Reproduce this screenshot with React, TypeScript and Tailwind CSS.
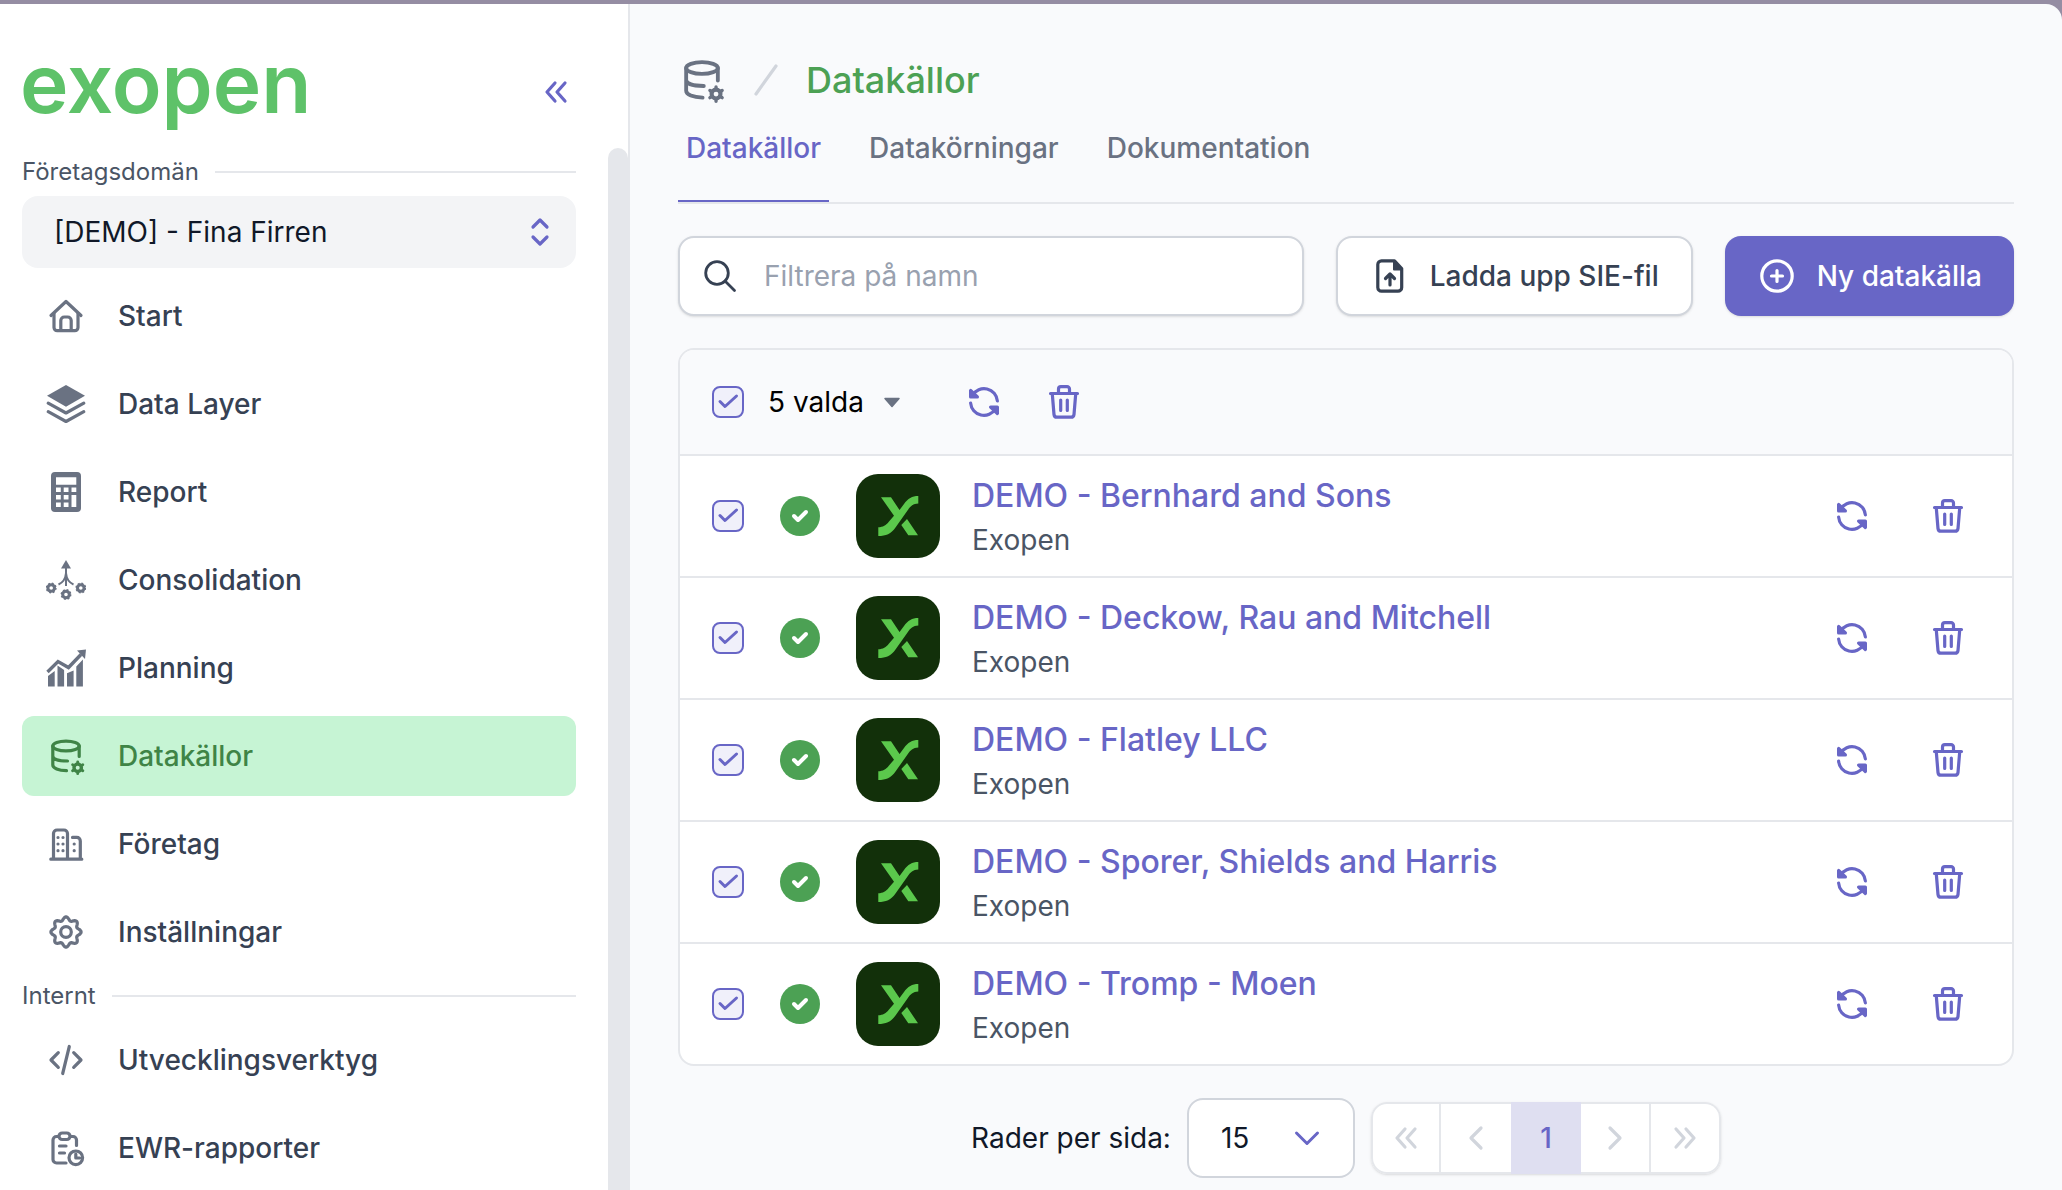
import type { ReactNode } from "react";

interface NavItem {
  label: string;
  icon: ReactNode;
  active?: boolean;
}

interface DataSource {
  id: number;
  name: string;
  provider: string;
}

const sources: DataSource[] = [
  { id: 1, name: "DEMO - Bernhard and Sons", provider: "Exopen" },
  { id: 2, name: "DEMO - Deckow, Rau and Mitchell", provider: "Exopen" },
  { id: 3, name: "DEMO - Flatley LLC", provider: "Exopen" },
  { id: 4, name: "DEMO - Sporer, Shields and Harris", provider: "Exopen" },
  { id: 5, name: "DEMO - Tromp - Moen", provider: "Exopen" },
];

const mainNav: NavItem[] = [
  { label: "Start", icon: <HomeIcon /> },
  { label: "Data Layer", icon: <LayersIcon /> },
  { label: "Report", icon: <CalculatorIcon /> },
  { label: "Consolidation", icon: <ConsolidationIcon /> },
  { label: "Planning", icon: <PlanningIcon /> },
  { label: "Datakällor", icon: <DatabaseCogIcon />, active: true },
  { label: "Företag", icon: <BuildingIcon /> },
  { label: "Inställningar", icon: <CogIcon /> },
];

const internalNav: NavItem[] = [
  { label: "Utvecklingsverktyg", icon: <CodeIcon /> },
  { label: "EWR-rapporter", icon: <ClipboardIcon /> },
];

export default function App() {
  return (
    <div className="h-screen overflow-hidden bg-[#958da3] pt-1 font-['Inter',sans-serif] text-[28px] leading-10 text-gray-900">
      <div className="flex h-full overflow-hidden rounded-tr-2xl bg-[#f9fafc]">
        <Sidebar />
        <main className="min-w-0 flex-1 px-12 pt-12">
          <PageHeader />
          <Toolbar />
          <SourceTable />
          <Pagination />
        </main>
      </div>
    </div>
  );
}

function Sidebar() {
  return (
    <aside className="flex w-[630px] shrink-0 flex-col border-r-2 border-gray-200 bg-white">
      <div className="flex h-36 shrink-0 items-center justify-between pr-[52px] pl-5">
        <a
          href="#"
          className="pt-4 text-[82px] leading-[100px] font-semibold text-[#5ec269]"
        >
          exopen
        </a>
        <button type="button" aria-label="Dölj meny" className="mt-8 text-[#6866c6]">
          <Icon>
            <path d="M19 11l-8 9 8 9M29 11l-8 9 8 9" />
          </Icon>
        </button>
      </div>
      <div className="flex min-h-0 flex-1 justify-between">
        <nav className="w-[576px] pl-[22px]">
          <SectionLabel htmlFor="domain">Företagsdomän</SectionLabel>
          <div className="relative mb-2">
            <select
              id="domain"
              className="block h-[72px] w-full appearance-none rounded-2xl bg-gray-100 px-8 text-gray-900"
            >
              <option>[DEMO] - Fina Firren</option>
            </select>
            <span className="pointer-events-none absolute top-4 right-4 text-[#6866c6]">
              <Icon>
                <path d="M13 15l7-7 7 7M13 25l7 7 7-7" />
              </Icon>
            </span>
          </div>
          <NavList items={mainNav} />
          <SectionLabel>Internt</SectionLabel>
          <NavList items={internalNav} />
        </nav>
        <div className="w-5 rounded-t-full bg-gray-200" />
      </div>
    </aside>
  );
}

function SectionLabel({ children, htmlFor }: { children: ReactNode; htmlFor?: string }) {
  return (
    <div className="flex h-12 items-center gap-4 text-2xl text-gray-600">
      {htmlFor ? <label htmlFor={htmlFor}>{children}</label> : <h2>{children}</h2>}
      <span className="h-0.5 flex-1 bg-gray-200" />
    </div>
  );
}

function NavList({ items }: { items: NavItem[] }) {
  return (
    <ul className="flex flex-col gap-2">
      {items.map((item) => (
        <li key={item.label}>
          <a
            href="#"
            aria-current={item.active ? "page" : undefined}
            className={
              item.active
                ? "flex h-20 items-center gap-8 rounded-xl bg-[#c6f4d4] px-6 font-medium text-[#3f8446]"
                : "flex h-20 items-center gap-8 rounded-xl px-6 font-medium text-gray-700"
            }
          >
            <span className={item.active ? "" : "text-gray-500"}>{item.icon}</span>
            {item.label}
          </a>
        </li>
      ))}
    </ul>
  );
}

function PageHeader() {
  return (
    <header>
      <div className="flex h-14 items-center gap-5">
        <span className="text-gray-500">
          <DatabaseCogIcon className="size-12" />
        </span>
        <span className="text-gray-300">
          <Icon>
            <path d="M10 34L30 6" />
          </Icon>
        </span>
        <h1 className="text-4xl font-medium text-[#4ca154]">Datakällor</h1>
      </div>
      <nav className="flex gap-8 border-b-2 border-gray-200 font-medium text-gray-500">
        <a
          href="#"
          aria-current="page"
          className="h-[94px] border-b-2 border-[#6866c6] px-2 pt-5 text-[#6866c6]"
        >
          Datakällor
        </a>
        <a href="#" className="px-2 pt-5">
          Datakörningar
        </a>
        <a href="#" className="px-2 pt-5">
          Dokumentation
        </a>
      </nav>
    </header>
  );
}

function Toolbar() {
  return (
    <div className="mt-8 flex gap-8">
      <div className="relative flex-1">
        <input
          type="text"
          aria-label="Filtrera på namn"
          placeholder="Filtrera på namn"
          className="block h-20 w-full rounded-2xl border-2 border-gray-300 bg-white pr-6 pl-[84px] shadow-sm placeholder:text-gray-400"
        />
        <span className="pointer-events-none absolute top-5 left-[22px] text-gray-700">
          <Icon>
            <circle cx="17" cy="17" r="11.3" strokeWidth="2.8" />
            <path d="M25 25l9.5 9.5" strokeWidth="2.8" />
          </Icon>
        </span>
      </div>
      <button
        type="button"
        className="flex h-20 items-center gap-5 rounded-2xl border-2 border-gray-300 bg-white px-8 font-medium text-gray-700 shadow-sm"
      >
        <Icon>
          <path d="M11.500 4.800H24.500L31.700 12.500V31.500a3.700 3.700 0 0 1-3.700 3.700H11.500a3.700 3.700 0 0 1-3.700-3.700V8.500a3.700 3.700 0 0 1 3.700-3.700z" />
          <path d="M24 5v8.500h8z" fill="currentColor" strokeWidth="2" />
          <path d="M20 29V18.500M15.500 22.500l4.500-4.500 4.500 4.500" />
        </Icon>
        Ladda upp SIE-fil
      </button>
      <button
        type="button"
        className="flex h-20 items-center gap-5 rounded-2xl bg-[#6866c6] px-8 font-medium text-white shadow-sm"
      >
        <Icon>
          <circle cx="20" cy="20" r="15.200" />
          <path d="M20 14.500v11M14.500 20h11" />
        </Icon>
        Ny datakälla
      </button>
    </div>
  );
}

function SourceTable() {
  return (
    <section className="mt-8 overflow-hidden rounded-2xl border-2 border-gray-200 bg-white">
      <table className="w-full border-separate border-spacing-0">
        <thead className="bg-[#f9fafc]">
          <tr>
            <th colSpan={5} className="h-[104px] pl-8 font-normal">
              <div className="flex items-center">
                <Checkbox label="Markera alla" />
                <button type="button" className="ml-6 flex items-center gap-2 text-black">
                  5 valda
                  <svg viewBox="0 0 40 40" className="size-10 text-gray-500" aria-hidden="true">
                    <path
                      d="M13 16.500h14l-7 8z"
                      fill="currentColor"
                      stroke="currentColor"
                      strokeWidth="1.500"
                      strokeLinejoin="round"
                    />
                  </svg>
                </button>
                <RowButton label="Uppdatera valda" className="ml-13">
                  <RefreshIcon />
                </RowButton>
                <RowButton label="Ta bort valda" className="ml-10">
                  <TrashIcon />
                </RowButton>
              </div>
            </th>
          </tr>
        </thead>
        <tbody>
          {sources.map((source) => (
            <tr key={source.id} className="[&>td]:border-t-2 [&>td]:border-gray-200">
              <td className="h-[122px] w-[100px] pl-8">
                <Checkbox label={`Markera ${source.name}`} />
              </td>
              <td className="w-[76px]">
                <StatusIcon />
              </td>
              <td className="w-[116px]">
                <ExopenMark />
              </td>
              <td className="pt-1">
                <a href="#" className="block text-[32px] leading-11 font-medium text-[#6866c6]">
                  {source.name}
                </a>
                <span className="block leading-11 text-gray-600">{source.provider}</span>
              </td>
              <td className="pr-11">
                <div className="flex justify-end gap-14">
                  <RowButton label={`Uppdatera ${source.name}`}>
                    <RefreshIcon />
                  </RowButton>
                  <RowButton label={`Ta bort ${source.name}`}>
                    <TrashIcon />
                  </RowButton>
                </div>
              </td>
            </tr>
          ))}
        </tbody>
      </table>
    </section>
  );
}

function Pagination() {
  return (
    <div className="mt-8 flex items-center justify-center gap-4">
      <label htmlFor="page-size">Rader per sida:</label>
      <div className="relative">
        <select
          id="page-size"
          className="block h-20 w-[168px] appearance-none rounded-2xl border-2 border-gray-300 bg-white px-8"
        >
          <option>15</option>
        </select>
        <span className="pointer-events-none absolute top-5 right-7 text-[#6866c6]">
          <Icon>
            <path d="M9.500 15l10.500 10.500L30.500 15" strokeWidth="3" />
          </Icon>
        </span>
      </div>
      <nav aria-label="Sidor" className="flex h-[72px] rounded-2xl bg-white text-gray-300 shadow-sm">
        <PageButton label="Första sidan">
          <path d="M19 11l-8 9 8 9M29 11l-8 9 8 9" />
        </PageButton>
        <PageButton label="Föregående sida">
          <path d="M25 10l-10 10 10 10" />
        </PageButton>
        <button
          type="button"
          aria-current="page"
          className="w-[70px] bg-[#dfdff1] font-medium text-[#6866c6]"
        >
          1
        </button>
        <PageButton label="Nästa sida">
          <path d="M15 10l10 10-10 10" />
        </PageButton>
        <PageButton label="Sista sidan">
          <path d="M11 11l8 9-8 9M21 11l8 9-8 9" />
        </PageButton>
      </nav>
    </div>
  );
}

function PageButton({ label, children }: { label: string; children: ReactNode }) {
  return (
    <button
      type="button"
      aria-label={label}
      className="flex w-[70px] items-center justify-center border-y-2 border-r-2 border-gray-200 first:rounded-l-2xl first:border-l-2 last:rounded-r-2xl nth-2:border-r-0"
    >
      <Icon>{children}</Icon>
    </button>
  );
}

function RowButton({
  label,
  className = "",
  children,
}: {
  label: string;
  className?: string;
  children: ReactNode;
}) {
  return (
    <button type="button" aria-label={label} className={`text-[#6866c6] ${className}`}>
      {children}
    </button>
  );
}

function Checkbox({ label }: { label: string }) {
  return (
    <span className="relative block size-8">
      <input
        type="checkbox"
        defaultChecked
        aria-label={label}
        className="peer block size-8 appearance-none rounded-lg border-2 border-[#6866c6] bg-[#f0f0fa]"
      />
      <svg
        viewBox="0 0 32 32"
        aria-hidden="true"
        className="pointer-events-none absolute inset-0 hidden size-8 text-[#6866c6] peer-checked:block"
      >
        <path
          d="M8 15.500l5 5L24.500 10"
          fill="none"
          stroke="currentColor"
          strokeWidth="3"
          strokeLinecap="round"
          strokeLinejoin="round"
        />
      </svg>
    </span>
  );
}

function Icon({ children, className = "size-10" }: { children: ReactNode; className?: string }) {
  return (
    <svg
      viewBox="0 0 40 40"
      className={`block ${className}`}
      fill="none"
      stroke="currentColor"
      strokeWidth="3.2"
      strokeLinecap="round"
      strokeLinejoin="round"
      aria-hidden="true"
    >
      {children}
    </svg>
  );
}

function StatusIcon() {
  return (
    <svg viewBox="0 0 40 40" className="block size-10" role="img" aria-label="OK">
      <circle cx="20" cy="20" r="20" fill="#4ca154" />
      <path
        d="M14 20l4 4 8-8"
        fill="none"
        stroke="#fff"
        strokeWidth="4"
        strokeLinecap="round"
        strokeLinejoin="round"
      />
    </svg>
  );
}

function ExopenMark() {
  return (
    <svg viewBox="0 0 84 84" className="block size-[84px]" aria-hidden="true">
      <rect width="84" height="84" rx="22" fill="#12300a" />
      <path
        fill="#5bc84c"
        d="M25 23.300H35L43.500 36 48 30C52 24.500 56 22 62.300 22V29.500C57 29.800 54.500 32 51.500 36.500L39.500 53.500C35 60 30 62 22.300 62V53.300C27 53 30 51.500 33 47.500L38 41.700Z M51 45L62 61.300H52.300L45.300 51Z"
      />
    </svg>
  );
}

function RefreshIcon() {
  return (
    <Icon>
      <path d="M33.400 19A13.400 13.400 0 0 0 8.500 13.200M6.600 21A13.400 13.400 0 0 0 31.500 26.800" />
      <path d="M6.600 8.500V15h6.800zM33.400 31.500V25h-6.800z" fill="currentColor" />
    </Icon>
  );
}

function TrashIcon() {
  return (
    <Icon>
      <path d="M6.500 11.500h27M14.500 11V7a2.400 2.400 0 0 1 2.400-2.400h6.200A2.400 2.400 0 0 1 25.500 7v4" />
      <path d="M8.300 12l1.700 20.500a3 3 0 0 0 3 2.700h14a3 3 0 0 0 3-2.700L31.700 12M16.700 18v10.500M23.300 18v10.500" />
    </Icon>
  );
}

function HomeIcon() {
  return (
    <Icon>
      <path d="M5 19.500L20 5.500l15 14" />
      <path d="M8 17.500V31.500a3.200 3.200 0 0 0 3.200 3.200h17.600a3.200 3.200 0 0 0 3.200-3.200V17.500" />
      <path d="M14.800 34V24.500a3.500 3.500 0 0 1 3.500-3.500h3.400a3.500 3.500 0 0 1 3.500 3.500V34" />
    </Icon>
  );
}

function LayersIcon() {
  return (
    <Icon>
      <path d="M20 1L39 11.700 20 22.700 1 11.700z" fill="currentColor" stroke="none" />
      <path d="M2.200 19.200L20 29l17.800-9.800M2.200 27.700L20 37.500l17.800-9.800" />
    </Icon>
  );
}

function CalculatorIcon() {
  return (
    <Icon>
      <path
        d="M9 0h22a4 4 0 0 1 4 4v32a4 4 0 0 1-4 4H9a4 4 0 0 1-4-4V4a4 4 0 0 1 4-4zM10 5.300v7.400h20.300V5.300zM10 15.500v4.600h4.800v-4.600zM17.700 15.500v4.600h4.800v-4.600zM25.500 15.500v4.600h4.800v-4.600zM10 23v4.600h4.800V23zM17.700 23v4.600h4.800V23zM25.500 23v12h4.800V23zM10 30.400V35h4.800v-4.600zM17.700 30.400V35h4.800v-4.600z"
        fill="currentColor"
        fillRule="evenodd"
        stroke="none"
      />
    </Icon>
  );
}

function ConsolidationIcon() {
  return (
    <Icon>
      <path d="M20 0l5 8.500H15z" fill="currentColor" stroke="none" />
      <path
        d="M20 8v18M20 13c-.500 6-3 9.500-7.500 11.500M20 13c.500 6 3 9.500 7.500 11.500"
        strokeWidth="2"
        strokeLinecap="butt"
      />
      <MiniGear x={5.2} y={28} />
      <MiniGear x={34.8} y={28} />
      <MiniGear x={20} y={34.5} />
    </Icon>
  );
}

function MiniGear({ x, y }: { x: number; y: number }) {
  return (
    <>
      <circle cx={x} cy={y} r="3.300" strokeWidth="3" />
      <circle cx={x} cy={y} r="4.700" strokeWidth="1.500" strokeLinecap="butt" strokeDasharray="1.850 1.850" />
    </>
  );
}

function PlanningIcon() {
  return (
    <Icon>
      <path
        d="M2 28l6.700-5v15.500H2zM11.500 17.500l6.600 4.500v16.500h-6.600zM21 25.300l6.600-2.800v16H21zM30.300 18.500l6.600-7v27h-6.600z"
        fill="currentColor"
        stroke="none"
      />
      <path
        d="M1.500 24L12 13.500l10.500 6L35 6.500"
        strokeWidth="3.400"
        strokeLinecap="butt"
        strokeLinejoin="miter"
      />
      <path d="M40 1.500l-9 1 8 8.500z" fill="currentColor" stroke="none" />
    </Icon>
  );
}

function DatabaseCogIcon({ className }: { className?: string }) {
  return (
    <Icon className={className}>
      <ellipse cx="20" cy="10" rx="13.200" ry="4.900" />
      <path d="M6.800 10v19c0 3.200 5.700 5.500 13.700 5.700M6.800 20c0 3.200 6 5 14.700 5M33.200 10v10.500" />
      <circle cx="31.700" cy="31.700" r="3.700" strokeWidth="3.400" />
      <path d="M31.700 27.500v-1.700M31.700 36v1.700M35.300 29.600l1.500-.900M28.100 33.800l-1.500.900M35.300 33.800l1.500.900M28.100 29.600l-1.500-.900" strokeWidth="2.800" />
    </Icon>
  );
}

function BuildingIcon() {
  return (
    <Icon>
      <path d="M4.800 35.200h31M7.500 35V9.500a3.500 3.500 0 0 1 3.500-3.500h7a3.500 3.500 0 0 1 3.500 3.500V35M26.500 13.400h4.300a3.500 3.500 0 0 1 3.500 3.500V35" />
      <path
        d="M12 13.500h0M17 13.500h0M12 20h0M17 20h0M12 26.700h0M17 26.700h0M28.200 20h0M28.200 26.700h0"
        strokeWidth="3.200"
      />
    </Icon>
  );
}

// eight soft lobes around the hub
const cogOutline = Array.from({ length: 96 }, (_, i) => {
  const angle = (i / 96) * Math.PI * 2;
  const radius = 13.4 + 1.7 * Math.cos(8 * angle);
  return `${(20 + radius * Math.sin(angle)).toFixed(2)},${(20 - radius * Math.cos(angle)).toFixed(2)}`;
}).join(" ");

function CogIcon() {
  return (
    <Icon>
      <polygon points={cogOutline} />
      <circle cx="20" cy="20" r="5.300" />
    </Icon>
  );
}

function CodeIcon() {
  return (
    <Icon>
      <path d="M12.300 12.700L5 20l7.300 7.300M27.700 12.700L35 20l-7.300 7.300M23.300 6.500l-6.600 27" />
    </Icon>
  );
}

function ClipboardIcon() {
  return (
    <Icon>
      <path d="M12 8.500h-1.500A3.500 3.500 0 0 0 7 12v19.500A3.500 3.500 0 0 0 10.500 35H20M25 8.500h2a3.500 3.500 0 0 1 3.500 3.500v5.500" />
      <rect x="13" y="5" width="11" height="6.500" rx="3.200" />
      <path d="M13.500 18H20M13.500 25h5M29.800 26v4h3.800" />
      <circle cx="29.800" cy="29.800" r="6.800" />
    </Icon>
  );
}
